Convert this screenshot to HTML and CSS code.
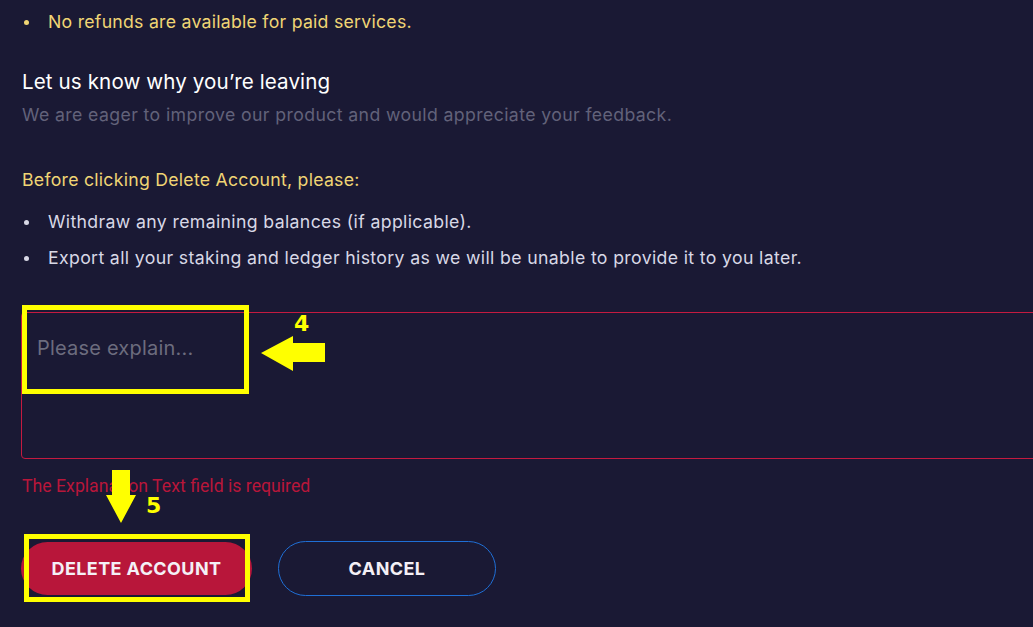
FILE: index.html
```html
<!DOCTYPE html>
<html lang="en">
<head>
<meta charset="utf-8">
<title>Delete account</title>
<link rel="stylesheet" href="styles.css">
</head>
<body>
<main class="page">
  <ul class="list list-warn">
    <li>No refunds are available for paid services.</li>
  </ul>

  <h2 class="title">Let us know why you’re leaving</h2>
  <p class="subtitle">We are eager to improve our product and would appreciate your feedback.</p>

  <p class="before">Before clicking Delete Account, please:</p>
  <ul class="list list-plain">
    <li>Withdraw any remaining balances (if applicable).</li>
    <li>Export all your staking and ledger history as we will be unable to provide it to you later.</li>
  </ul>

  <div class="field">
    <textarea class="explain" placeholder="Please explain..."></textarea>
  </div>
  <p class="error">The Explanation Text field is required</p>

  <div class="actions">
    <button class="btn btn-delete" type="button">DELETE ACCOUNT</button>
    <button class="btn btn-cancel" type="button">CANCEL</button>
  </div>

  <svg class="overlay" width="1033" height="627" viewBox="0 0 1033 627" aria-hidden="true">
    <rect x="24.5" y="307.5" width="222" height="84" fill="none" stroke="#ffff00" stroke-width="5"/>
    <polygon points="261,353 293,336 293,343 325,343 325,362 293,362 293,371" fill="#ffff00"/>
    <text x="294" y="331" class="num">4</text>
    <polygon points="112,470 130,470 130,495 136,495 121,523 106,495 112,495" fill="#ffff00"/>
    <text x="146" y="513" class="num">5</text>
    <rect x="26.5" y="536.5" width="221" height="63" fill="none" stroke="#ffff00" stroke-width="5"/>
  </svg>
</main>
</body>
</html>
```

FILE: styles.css
```css
html, body {
  margin: 0;
  padding: 0;
  background: #1a1934;
  overflow: hidden;
}

.page {
  position: relative;
  width: 1033px;
  height: 627px;
  padding: 4px 0 0 22px;
  box-sizing: border-box;
  font-family: "Inter", "Noto Sans", sans-serif;
  font-size: 17.7px;
  letter-spacing: 0.25px;
  color: #dcdcea;
}

.list {
  list-style: none;
  margin: 0;
  padding: 0;
}

.list li {
  position: relative;
  padding-left: 26px;
  line-height: 36px;
}

.list li::before {
  content: "";
  position: absolute;
  left: 2px;
  top: 16px;
  width: 5px;
  height: 5px;
  border-radius: 50%;
  background: currentColor;
}

.list-warn {
  color: #f0d574;
}

.list-plain {
  color: #d8d8e6;
  margin-top: 12px;
  letter-spacing: 0.35px;
}

.title {
  margin: 29px 0 0;
  font-size: 20.6px;
  font-weight: 400;
  letter-spacing: 0.1px;
  line-height: 26px;
  color: #ffffff;
}

.subtitle {
  margin: 8px 0 0;
  line-height: 24px;
  letter-spacing: 0.38px;
  color: #62627a;
}

.before {
  margin: 41px 0 0;
  line-height: 24px;
  color: #f0d574;
}

.field {
  margin: 36px 0 0 -1px;
  width: 1060px;
}

.explain {
  display: block;
  box-sizing: border-box;
  width: 100%;
  height: 147px;
  margin: 0;
  padding: 23px 15px;
  background: transparent;
  border: 1px solid #c41a40;
  border-radius: 4px;
  resize: none;
  outline: none;
  font-family: "Inter", "Noto Sans", sans-serif;
  font-size: 20px;
  letter-spacing: 0.2px;
  color: #dcdcea;
}

.explain::placeholder {
  color: #6c6c7e;
}

.error {
  margin: 18px 0 0;
  font-family: "Roboto", "Liberation Sans", sans-serif;
  font-size: 17.7px;
  letter-spacing: 0;
  line-height: 18px;
  color: #b8163a;
}

.actions {
  display: flex;
  align-items: center;
  gap: 26px;
  margin: 46px 0 0 -1px;
}

.btn {
  box-sizing: border-box;
  height: 54px;
  border-radius: 28px;
  font-family: "Inter", "Noto Sans", sans-serif;
  font-size: 18px;
  font-weight: 700;
  letter-spacing: 0.4px;
  color: #f4f0f6;
  cursor: pointer;
}

.btn-delete {
  width: 231px;
  height: 53px;
  background: #b8163a;
  border: none;
}

.btn-cancel {
  width: 218px;
  height: 55px;
  background: transparent;
  border: 1px solid #1f6fd6;
}

.overlay {
  position: absolute;
  left: 0;
  top: 0;
  pointer-events: none;
}

.overlay .num {
  font-family: "DejaVu Sans", sans-serif;
  font-size: 22px;
  font-weight: 700;
  fill: #ffff00;
}
```
